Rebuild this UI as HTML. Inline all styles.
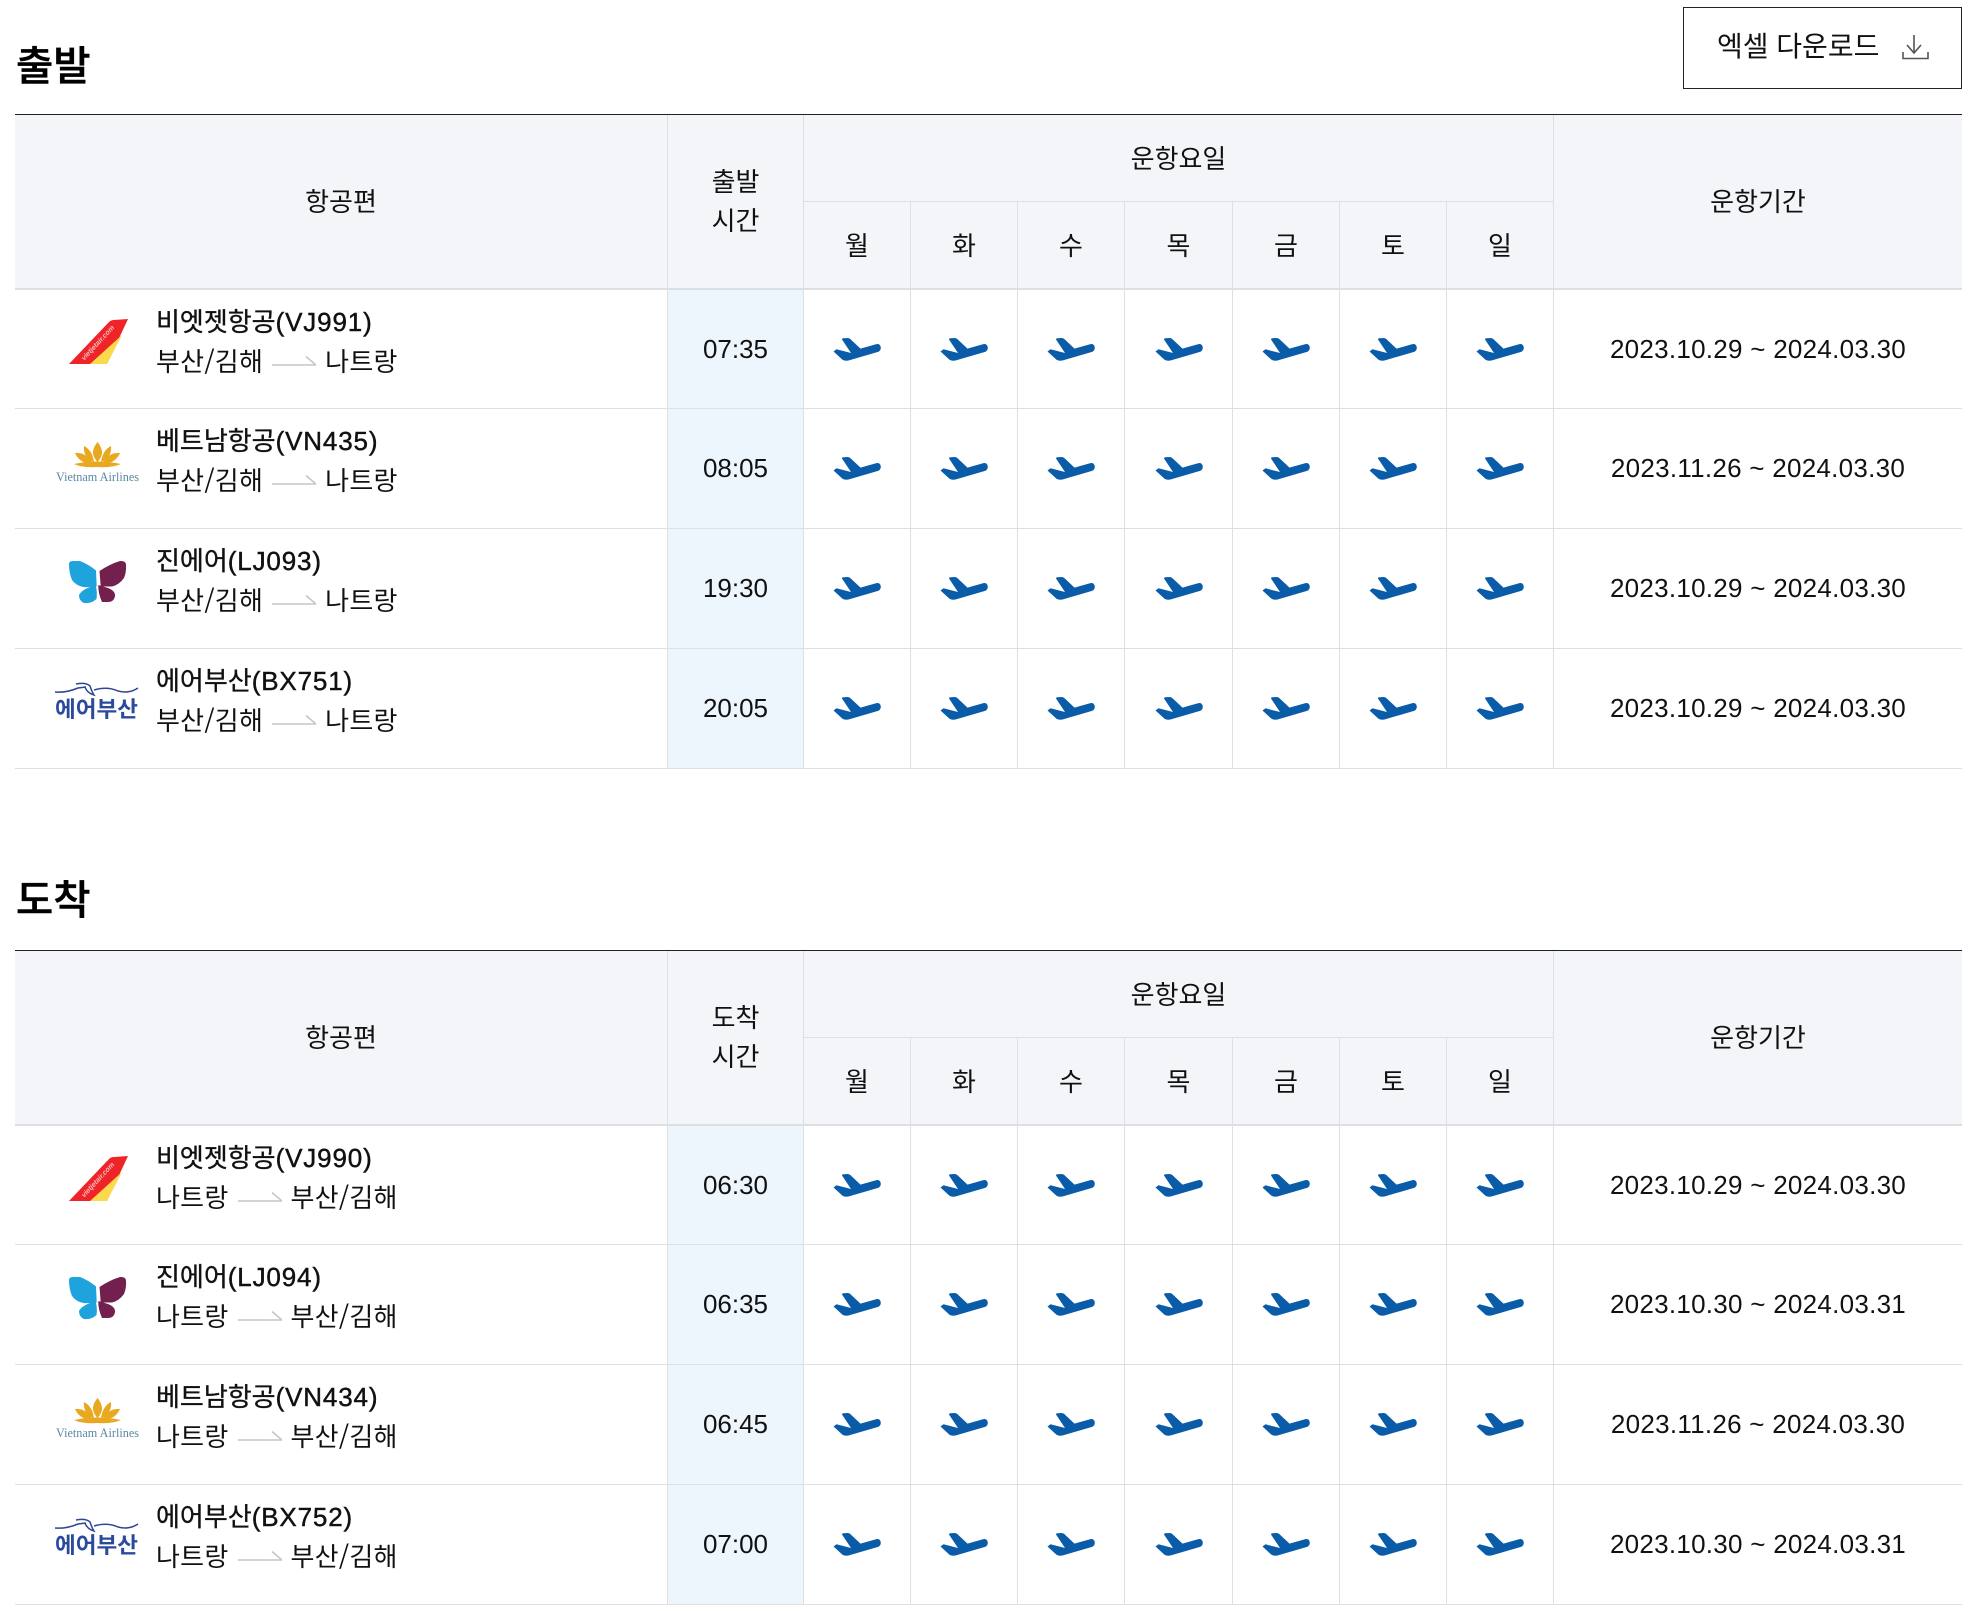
<!DOCTYPE html>
<html lang="ko">
<head>
<meta charset="utf-8">
<title>운항 스케줄</title>
<style>
html,body{margin:0;padding:0;background:#fff}
body{position:relative;width:1971px;height:1611px;overflow:hidden;font-family:"Liberation Sans","Noto Sans CJK KR",sans-serif;font-size:26px;color:#111;line-height:39px}
h2{position:absolute;left:16px;margin:0;font-size:40.5px;line-height:50px;font-weight:500;color:#000;-webkit-text-stroke:.5px #000}
.dl{position:absolute;left:1683px;top:7px;width:279px;height:82px;box-sizing:border-box;border:1px solid #222;font-size:28px;line-height:77px;color:#111}
.dl span{position:absolute;left:33px;top:0;white-space:nowrap}
.dl svg{position:absolute;left:218px;top:26px}
table{position:absolute;left:15px;width:1947px;border-collapse:separate;border-spacing:0;table-layout:fixed;border-top:1px solid #222}
th,td{box-sizing:border-box;padding:0;text-align:center;vertical-align:middle;font-weight:400;border-right:1px solid #dcdfe4}
th:last-child,td:last-child{border-right:0}
th{background:#f3f5f9;padding-top:3px}
tr.h1 th{height:87px}
tr.h1 th.g{border-bottom:1px solid #dcdfe4;border-right:1px solid #dcdfe4}
tr.h2 th{height:88px;border-bottom:2px solid #dcdfe4}
tr.h2 th:last-child{border-right:1px solid #dcdfe4}
th.b{border-bottom:2px solid #dcdfe4;padding-top:1px}
td{height:120px;border-bottom:1px solid #dcdfe4}
tr.f td{height:119px}
td.t{background:#edf5fd}
td.d{letter-spacing:.27px}
td.a{position:relative;text-align:left;vertical-align:top}
td.a svg.l{position:absolute;left:37px;top:25px}
td.a svg.l.j{top:26px}
.n,.r{font-family:"Noto Sans CJK KR","Liberation Sans",sans-serif}
.n{position:absolute;left:141px;top:11px;white-space:nowrap;-webkit-text-stroke:.35px #111}
.n b{font-family:"Liberation Sans",sans-serif;font-weight:400;letter-spacing:.85px;-webkit-text-stroke:.45px #111}
.r{position:absolute;left:141px;top:51px;white-space:nowrap;letter-spacing:.25px}
.r svg{display:inline-block;vertical-align:5px;margin:0 9px}
.p{display:block;margin:0 auto}
</style>
</head>
<body>
<svg width="0" height="0" style="position:absolute">
<symbol id="pl" viewBox="0 0 48 23"><path fill="#0a5ca8" d="M0.5 13.5L3.5 11.3L18 15L9 1.5Q9 0.5 10.5 0.3L14.5 0Q16 0 17 0.8L27.5 10.6L43 6.2Q46.5 5.3 47.6 8.5Q48.4 12.2 45.5 13.7L15.5 22.5Q12 23.2 9.5 21.8Z"/></symbol>
<symbol id="ar" viewBox="0 0 44 10"><path fill="none" stroke="#c6c6c6" stroke-width="1.6" d="M0 9H44M34 0.5L44 9"/></symbol>
</svg>

<h2 style="top:41px">출발</h2>
<div class="dl"><span>엑셀 다운로드</span>
<svg width="28" height="26" viewBox="0 0 28 26"><path fill="none" stroke="#555" stroke-width="1.6" d="M12 1V19M5 11L12 19L19 11M1 18V24.5H26V18"/></svg>
</div>

<table style="top:114px">
<colgroup><col style="width:653px"><col style="width:136px"><col style="width:107px"><col style="width:107px"><col style="width:107px"><col style="width:108px"><col style="width:107px"><col style="width:107px"><col style="width:107px"><col style="width:408px"></colgroup>
<thead>
<tr class="h1"><th rowspan="2" class="b">항공편</th><th rowspan="2" class="b">출발<br>시간</th><th colspan="7" class="g">운항요일</th><th rowspan="2" class="b">운항기간</th></tr>
<tr class="h2"><th>월</th><th>화</th><th>수</th><th>목</th><th>금</th><th>토</th><th>일</th></tr>
</thead>
<tbody>
<tr class="f"><td class="a">
<svg class="l" width="92" height="60" viewBox="0 0 92 60"><path fill="#ee2429" d="M17 49L57 7Q59 5 62 5L76 4L55 49Z"/><path fill="#fbd94c" d="M38 49L70 20L55 49Z"/><text x="46" y="30" text-anchor="middle" transform="rotate(-47 46 28)" font-size="7" font-weight="700" font-style="italic" fill="#fff" opacity=".7" font-family="Liberation Sans, sans-serif">vietjetair.com</text></svg>
<div class="n">비엣젯항공<b>(VJ991)</b></div><div class="r">부산/김해<svg width="44" height="10"><use href="#ar"/></svg>나트랑</div></td>
<td class="t">07:35</td>
<td><svg class="p" width="48" height="23"><use href="#pl"/></svg></td><td><svg class="p" width="48" height="23"><use href="#pl"/></svg></td><td><svg class="p" width="48" height="23"><use href="#pl"/></svg></td><td><svg class="p" width="48" height="23"><use href="#pl"/></svg></td><td><svg class="p" width="48" height="23"><use href="#pl"/></svg></td><td><svg class="p" width="48" height="23"><use href="#pl"/></svg></td><td><svg class="p" width="48" height="23"><use href="#pl"/></svg></td>
<td class="d">2023.10.29 ~ 2024.03.30</td></tr>
<tr><td class="a">
<svg class="l" width="92" height="60" viewBox="0 0 92 60"><g fill="#e8a920"><path d="M45.5 8C51 15 52 21 45.5 28C39 21 40 15 45.5 8Z"/><path d="M32 12C38 15 41 21 42 28C36 27 31 20 32 12Z"/><path d="M59 12C53 15 50 21 49 28C55 27 60 20 59 12Z"/><path d="M23 19C31 18 37 23 40 29C32 30 26 26 23 19Z"/><path d="M68 19C60 18 54 23 51 29C59 30 65 26 68 19Z"/><path d="M22 30Q45 25 69 30Q60 34 45.5 33Q30 34 22 30Z"/></g><text x="4" y="47" textLength="83" lengthAdjust="spacingAndGlyphs" font-size="13" fill="#5a89a3" font-family="Liberation Serif, serif">Vietnam Airlines</text></svg>
<div class="n">베트남항공<b>(VN435)</b></div><div class="r">부산/김해<svg width="44" height="10"><use href="#ar"/></svg>나트랑</div></td>
<td class="t">08:05</td>
<td><svg class="p" width="48" height="23"><use href="#pl"/></svg></td><td><svg class="p" width="48" height="23"><use href="#pl"/></svg></td><td><svg class="p" width="48" height="23"><use href="#pl"/></svg></td><td><svg class="p" width="48" height="23"><use href="#pl"/></svg></td><td><svg class="p" width="48" height="23"><use href="#pl"/></svg></td><td><svg class="p" width="48" height="23"><use href="#pl"/></svg></td><td><svg class="p" width="48" height="23"><use href="#pl"/></svg></td>
<td class="d">2023.11.26 ~ 2024.03.30</td></tr>
<tr><td class="a">
<svg class="l j" width="92" height="60" viewBox="0 0 92 60"><path fill="#1ea3dc" d="M17 9Q17 6 21 6L28 6Q36 9 44 15.5L44.7 31.5L33 32.3Q24 31 20 25Q17 18 17 9Z"/><path fill="#1ea3dc" d="M27 40Q30 34 43.7 30Q45.5 38 44.5 44Q39 49 32 48Q27 46 27 40Z"/><path fill="#74204f" d="M47.5 16Q58 9 68 6Q74 5.5 74 10Q74.5 17 72 23Q67 30 60 31.5L48.7 31.5Z"/><path fill="#74204f" d="M46.3 30L56 33Q63.5 36 63 41Q62 47 56 47L50 47Q46 38 46.3 30Z"/></svg>
<div class="n">진에어<b>(LJ093)</b></div><div class="r">부산/김해<svg width="44" height="10"><use href="#ar"/></svg>나트랑</div></td>
<td class="t">19:30</td>
<td><svg class="p" width="48" height="23"><use href="#pl"/></svg></td><td><svg class="p" width="48" height="23"><use href="#pl"/></svg></td><td><svg class="p" width="48" height="23"><use href="#pl"/></svg></td><td><svg class="p" width="48" height="23"><use href="#pl"/></svg></td><td><svg class="p" width="48" height="23"><use href="#pl"/></svg></td><td><svg class="p" width="48" height="23"><use href="#pl"/></svg></td><td><svg class="p" width="48" height="23"><use href="#pl"/></svg></td>
<td class="d">2023.10.29 ~ 2024.03.30</td></tr>
<tr><td class="a">
<svg class="l" width="92" height="60" viewBox="0 0 92 60"><path fill="none" stroke="#2f4595" stroke-width="1.5" d="M3 18Q14 19 26 14L34 13M24 10Q34 8 38 12Q40 18 42 21Q35 19 33 13M42 16Q55 12 66 17Q77 20 86 14"/><text x="3" y="43" textLength="83" lengthAdjust="spacingAndGlyphs" font-size="22" font-weight="700" fill="#2b4a9c" font-family="Noto Sans CJK KR, sans-serif">에어부산</text></svg>
<div class="n">에어부산<b>(BX751)</b></div><div class="r">부산/김해<svg width="44" height="10"><use href="#ar"/></svg>나트랑</div></td>
<td class="t">20:05</td>
<td><svg class="p" width="48" height="23"><use href="#pl"/></svg></td><td><svg class="p" width="48" height="23"><use href="#pl"/></svg></td><td><svg class="p" width="48" height="23"><use href="#pl"/></svg></td><td><svg class="p" width="48" height="23"><use href="#pl"/></svg></td><td><svg class="p" width="48" height="23"><use href="#pl"/></svg></td><td><svg class="p" width="48" height="23"><use href="#pl"/></svg></td><td><svg class="p" width="48" height="23"><use href="#pl"/></svg></td>
<td class="d">2023.10.29 ~ 2024.03.30</td></tr>
</tbody>
</table>

<h2 style="top:875px">도착</h2>

<table style="top:950px">
<colgroup><col style="width:653px"><col style="width:136px"><col style="width:107px"><col style="width:107px"><col style="width:107px"><col style="width:108px"><col style="width:107px"><col style="width:107px"><col style="width:107px"><col style="width:408px"></colgroup>
<thead>
<tr class="h1"><th rowspan="2" class="b">항공편</th><th rowspan="2" class="b">도착<br>시간</th><th colspan="7" class="g">운항요일</th><th rowspan="2" class="b">운항기간</th></tr>
<tr class="h2"><th>월</th><th>화</th><th>수</th><th>목</th><th>금</th><th>토</th><th>일</th></tr>
</thead>
<tbody>
<tr class="f"><td class="a">
<svg class="l j" width="92" height="60" viewBox="0 0 92 60"><path fill="#ee2429" d="M17 49L57 7Q59 5 62 5L76 4L55 49Z"/><path fill="#fbd94c" d="M38 49L70 20L55 49Z"/><text x="46" y="30" text-anchor="middle" transform="rotate(-47 46 28)" font-size="7" font-weight="700" font-style="italic" fill="#fff" opacity=".7" font-family="Liberation Sans, sans-serif">vietjetair.com</text></svg>
<div class="n">비엣젯항공<b>(VJ990)</b></div><div class="r">나트랑<svg width="44" height="10"><use href="#ar"/></svg>부산/김해</div></td>
<td class="t">06:30</td>
<td><svg class="p" width="48" height="23"><use href="#pl"/></svg></td><td><svg class="p" width="48" height="23"><use href="#pl"/></svg></td><td><svg class="p" width="48" height="23"><use href="#pl"/></svg></td><td><svg class="p" width="48" height="23"><use href="#pl"/></svg></td><td><svg class="p" width="48" height="23"><use href="#pl"/></svg></td><td><svg class="p" width="48" height="23"><use href="#pl"/></svg></td><td><svg class="p" width="48" height="23"><use href="#pl"/></svg></td>
<td class="d">2023.10.29 ~ 2024.03.30</td></tr>
<tr><td class="a">
<svg class="l j" width="92" height="60" viewBox="0 0 92 60"><path fill="#1ea3dc" d="M17 9Q17 6 21 6L28 6Q36 9 44 15.5L44.7 31.5L33 32.3Q24 31 20 25Q17 18 17 9Z"/><path fill="#1ea3dc" d="M27 40Q30 34 43.7 30Q45.5 38 44.5 44Q39 49 32 48Q27 46 27 40Z"/><path fill="#74204f" d="M47.5 16Q58 9 68 6Q74 5.5 74 10Q74.5 17 72 23Q67 30 60 31.5L48.7 31.5Z"/><path fill="#74204f" d="M46.3 30L56 33Q63.5 36 63 41Q62 47 56 47L50 47Q46 38 46.3 30Z"/></svg>
<div class="n">진에어<b>(LJ094)</b></div><div class="r">나트랑<svg width="44" height="10"><use href="#ar"/></svg>부산/김해</div></td>
<td class="t">06:35</td>
<td><svg class="p" width="48" height="23"><use href="#pl"/></svg></td><td><svg class="p" width="48" height="23"><use href="#pl"/></svg></td><td><svg class="p" width="48" height="23"><use href="#pl"/></svg></td><td><svg class="p" width="48" height="23"><use href="#pl"/></svg></td><td><svg class="p" width="48" height="23"><use href="#pl"/></svg></td><td><svg class="p" width="48" height="23"><use href="#pl"/></svg></td><td><svg class="p" width="48" height="23"><use href="#pl"/></svg></td>
<td class="d">2023.10.30 ~ 2024.03.31</td></tr>
<tr><td class="a">
<svg class="l" width="92" height="60" viewBox="0 0 92 60"><g fill="#e8a920"><path d="M45.5 8C51 15 52 21 45.5 28C39 21 40 15 45.5 8Z"/><path d="M32 12C38 15 41 21 42 28C36 27 31 20 32 12Z"/><path d="M59 12C53 15 50 21 49 28C55 27 60 20 59 12Z"/><path d="M23 19C31 18 37 23 40 29C32 30 26 26 23 19Z"/><path d="M68 19C60 18 54 23 51 29C59 30 65 26 68 19Z"/><path d="M22 30Q45 25 69 30Q60 34 45.5 33Q30 34 22 30Z"/></g><text x="4" y="47" textLength="83" lengthAdjust="spacingAndGlyphs" font-size="13" fill="#5a89a3" font-family="Liberation Serif, serif">Vietnam Airlines</text></svg>
<div class="n">베트남항공<b>(VN434)</b></div><div class="r">나트랑<svg width="44" height="10"><use href="#ar"/></svg>부산/김해</div></td>
<td class="t">06:45</td>
<td><svg class="p" width="48" height="23"><use href="#pl"/></svg></td><td><svg class="p" width="48" height="23"><use href="#pl"/></svg></td><td><svg class="p" width="48" height="23"><use href="#pl"/></svg></td><td><svg class="p" width="48" height="23"><use href="#pl"/></svg></td><td><svg class="p" width="48" height="23"><use href="#pl"/></svg></td><td><svg class="p" width="48" height="23"><use href="#pl"/></svg></td><td><svg class="p" width="48" height="23"><use href="#pl"/></svg></td>
<td class="d">2023.11.26 ~ 2024.03.30</td></tr>
<tr><td class="a">
<svg class="l" width="92" height="60" viewBox="0 0 92 60"><path fill="none" stroke="#2f4595" stroke-width="1.5" d="M3 18Q14 19 26 14L34 13M24 10Q34 8 38 12Q40 18 42 21Q35 19 33 13M42 16Q55 12 66 17Q77 20 86 14"/><text x="3" y="43" textLength="83" lengthAdjust="spacingAndGlyphs" font-size="22" font-weight="700" fill="#2b4a9c" font-family="Noto Sans CJK KR, sans-serif">에어부산</text></svg>
<div class="n">에어부산<b>(BX752)</b></div><div class="r">나트랑<svg width="44" height="10"><use href="#ar"/></svg>부산/김해</div></td>
<td class="t">07:00</td>
<td><svg class="p" width="48" height="23"><use href="#pl"/></svg></td><td><svg class="p" width="48" height="23"><use href="#pl"/></svg></td><td><svg class="p" width="48" height="23"><use href="#pl"/></svg></td><td><svg class="p" width="48" height="23"><use href="#pl"/></svg></td><td><svg class="p" width="48" height="23"><use href="#pl"/></svg></td><td><svg class="p" width="48" height="23"><use href="#pl"/></svg></td><td><svg class="p" width="48" height="23"><use href="#pl"/></svg></td>
<td class="d">2023.10.30 ~ 2024.03.31</td></tr>
</tbody>
</table>
</body>
</html>
